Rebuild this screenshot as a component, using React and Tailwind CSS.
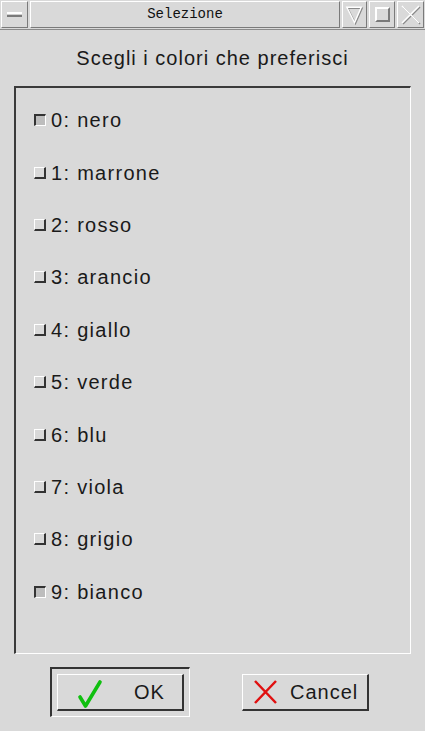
import React from 'react';

const colors = [
  { label: '0: nero', on: true },
  { label: '1: marrone', on: false },
  { label: '2: rosso', on: false },
  { label: '3: arancio', on: false },
  { label: '4: giallo', on: false },
  { label: '5: verde', on: false },
  { label: '6: blu', on: false },
  { label: '7: viola', on: false },
  { label: '8: grigio', on: false },
  { label: '9: bianco', on: true },
];

const raised = 'border-t border-l border-t-white border-l-white border-b border-r border-b-[#7a7a7a] border-r-[#7a7a7a]';

const Emboss = ({ d }) => (
  <svg width="24" height="26" viewBox="0 0 24 26" className="block">
    <path d={d} fill="none" stroke="#8a8a8a" strokeWidth="1.5" transform="translate(1 1)" />
    <path d={d} fill="none" stroke="#ffffff" strokeWidth="1.5" />
  </svg>
);

const TitleBar = () => (
  <div className="flex h-[30px] gap-[2px] border-b border-b-[#8a8a8a] bg-[#d9d9d9] px-[1px] pt-[1px] pb-[1px]">
    <div className={`flex w-[27px] items-center justify-center ${raised}`}>
      <div className="h-[5px] w-[15px] border-t-2 border-t-white border-b-2 border-b-[#7a7a7a] bg-[#cfcfcf]" />
    </div>
    <div className={`flex flex-1 items-center justify-center ${raised}`}>
      <span className="text-[14px] text-[#111]" style={{ fontFamily: '"Liberation Mono", monospace' }}>Selezione</span>
    </div>
    <div className={`flex w-[25px] items-center justify-center ${raised}`}>
      <Emboss d="M4 5 H19 L12 21 Z" />
    </div>
    <div className={`flex w-[26px] items-center justify-center ${raised}`}>
      <div className="h-[15px] w-[15px] border-t-2 border-l-2 border-t-white border-l-white border-b-2 border-r-2 border-b-[#7a7a7a] border-r-[#7a7a7a]" />
    </div>
    <div className={`flex w-[27px] items-center justify-center ${raised}`}>
      <Emboss d="M3 4 L20 21 M20 4 L3 21" />
    </div>
  </div>
);

const CheckBox = ({ on }) =>
  on ? (
    <div className="h-[12px] w-[12px] border-t-2 border-l-2 border-t-[#333] border-l-[#333] border-b border-r border-b-white border-r-white bg-[#bdbdbd]" />
  ) : (
    <div className="h-[12px] w-[12px] border-t border-l border-t-white border-l-white border-b-2 border-r-2 border-b-[#333] border-r-[#333] bg-[#d9d9d9]" />
  );

export default function App() {
  return (
    <div
      className="flex h-[731px] w-[425px] flex-col overflow-hidden bg-[#d9d9d9] text-[#1a1a1a]"
      style={{ fontFamily: '"Liberation Sans", Arial, sans-serif' }}
    >
      <TitleBar />

      <div className="flex h-[54px] items-center justify-center pt-[1px] text-[20px] tracking-[1px]">Scegli i colori che preferisci</div>

      <div className="mx-[14px] mt-[2px] h-[568px] border-t-2 border-l-2 border-t-[#3a3a3a] border-l-[#3a3a3a] border-b border-r border-b-white border-r-white pt-[6px]">
        {colors.map((c) => (
          <div key={c.label} className="flex h-[52.4px] items-center pl-[18px]">
            <CheckBox on={c.on} />
            <span className="ml-[5px] text-[20px] tracking-[1.3px]">{c.label}</span>
          </div>
        ))}
      </div>

      <div className="mt-[13px] flex items-start">
        <div className="ml-[50px] h-[50px] w-[140px] border-t-2 border-l-2 border-t-[#333] border-l-[#333] border-b border-r border-b-white border-r-white p-[5px]">
          <div className="flex h-[37px] w-[127px] items-center border-t border-l border-t-white border-l-white border-b-2 border-r-2 border-b-[#333] border-r-[#333]">
            <svg width="26" height="30" viewBox="0 0 26 30" className="ml-[19px] mt-[3px]">
              <path d="M3 18 L8.5 27 L23 3" fill="none" stroke="#10c010" strokeWidth="3.6" strokeLinecap="round" strokeLinejoin="round" />
            </svg>
            <span className="ml-[31px] text-[20px] tracking-[1px]">OK</span>
          </div>
        </div>
        <div className="ml-[52px] mt-[7px] flex h-[37px] w-[127px] items-center border-t border-l border-t-white border-l-white border-b-2 border-r-2 border-b-[#333] border-r-[#333]">
          <svg width="25" height="26" viewBox="0 0 25 26" className="ml-[10px]">
            <path d="M2 2 L23 24 M23 2 L2 24" fill="none" stroke="#e01010" strokeWidth="2.5" />
          </svg>
          <span className="ml-[12px] text-[20px] tracking-[1px]">Cancel</span>
        </div>
      </div>
    </div>
  );
}
